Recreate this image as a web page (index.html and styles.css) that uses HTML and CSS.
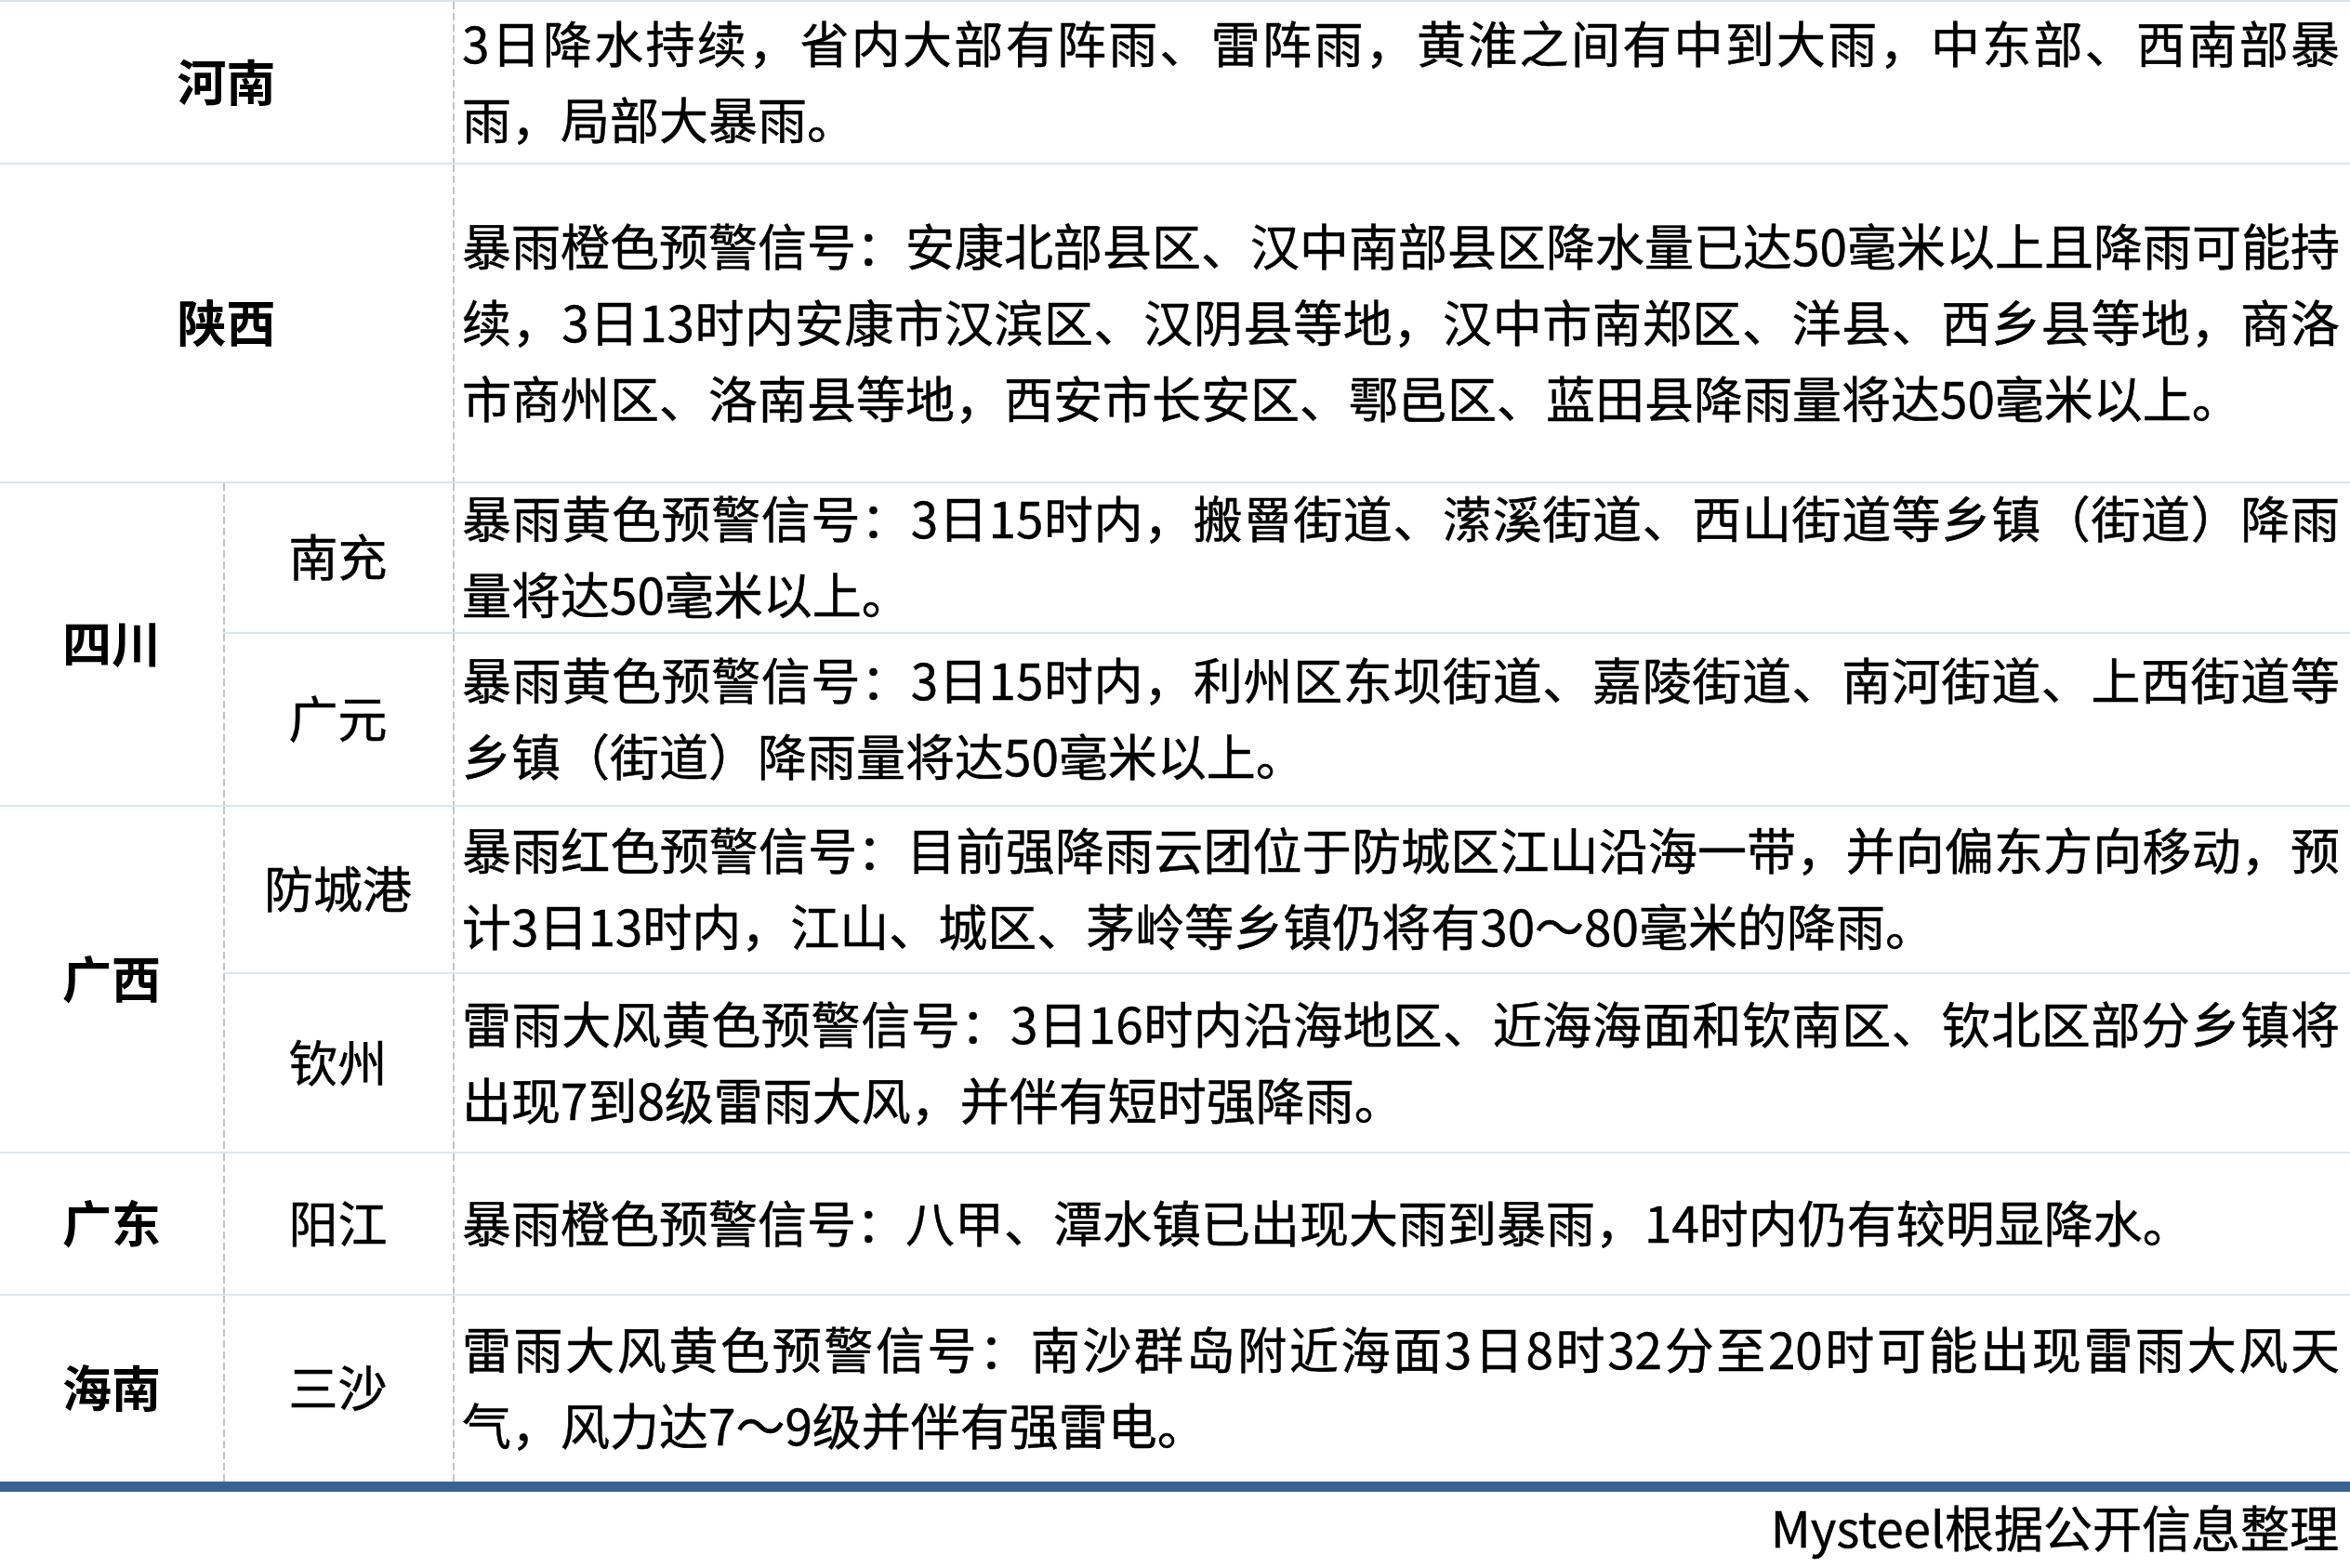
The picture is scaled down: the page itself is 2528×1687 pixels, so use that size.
FILE: index.html
```html
<!DOCTYPE html>
<html lang="zh-CN">
<head>
<meta charset="utf-8">
<title>各地暴雨预警</title>
<link rel="stylesheet" href="styles.css">
</head>
<body>
<div class="sheet">
  <div class="table">
    <div class="cell name prov wide r1">河南</div>
    <div class="cell text r1">
      <span class="ln">3日降水持续，省内大部有阵雨、雷阵雨，黄淮之间有中到大雨，中东部、西南部暴</span>
      <span class="ln last">雨，局部大暴雨。</span>
    </div>

    <div class="cell name prov wide r2">陕西</div>
    <div class="cell text r2">
      <span class="ln">暴雨橙色预警信号：安康北部县区、汉中南部县区降水量已达50毫米以上且降雨可能持</span>
      <span class="ln">续，3日13时内安康市汉滨区、汉阴县等地，汉中市南郑区、洋县、西乡县等地，商洛</span>
      <span class="ln last">市商州区、洛南县等地，西安市长安区、鄠邑区、蓝田县降雨量将达50毫米以上。</span>
    </div>

    <div class="cell name prov span-sc">四川</div>
    <div class="cell name city r3">南充</div>
    <div class="cell text r3">
      <span class="ln">暴雨黄色预警信号：3日15时内，搬罾街道、潆溪街道、西山街道等乡镇（街道）降雨</span>
      <span class="ln last">量将达50毫米以上。</span>
    </div>
    <div class="cell name city r4">广元</div>
    <div class="cell text r4">
      <span class="ln">暴雨黄色预警信号：3日15时内，利州区东坝街道、嘉陵街道、南河街道、上西街道等</span>
      <span class="ln last">乡镇（街道）降雨量将达50毫米以上。</span>
    </div>

    <div class="cell name prov span-gx">广西</div>
    <div class="cell name city r5">防城港</div>
    <div class="cell text r5">
      <span class="ln">暴雨红色预警信号：目前强降雨云团位于防城区江山沿海一带，并向偏东方向移动，预</span>
      <span class="ln last">计3日13时内，江山、城区、茅岭等乡镇仍将有30～80毫米的降雨。</span>
    </div>
    <div class="cell name city r6">钦州</div>
    <div class="cell text r6">
      <span class="ln">雷雨大风黄色预警信号：3日16时内沿海地区、近海海面和钦南区、钦北区部分乡镇将</span>
      <span class="ln last">出现7到8级雷雨大风，并伴有短时强降雨。</span>
    </div>

    <div class="cell name prov r7">广东</div>
    <div class="cell name city r7">阳江</div>
    <div class="cell text r7">
      <span class="ln last">暴雨橙色预警信号：八甲、潭水镇已出现大雨到暴雨，14时内仍有较明显降水。</span>
    </div>

    <div class="cell name prov r8">海南</div>
    <div class="cell name city r8">三沙</div>
    <div class="cell text r8">
      <span class="ln">雷雨大风黄色预警信号：南沙群岛附近海面3日8时32分至20时可能出现雷雨大风天</span>
      <span class="ln last">气，风力达7～9级并伴有强雷电。</span>
    </div>
  </div>
  <div class="source">Mysteel根据公开信息整理</div>
</div>
</body>
</html>
```

FILE: styles.css
```css
html, body {
  margin: 0;
  padding: 0;
  background: #ffffff;
}

body {
  width: 2528px;
  font-family: "Noto Sans CJK SC", "Noto Sans", "Liberation Sans", sans-serif;
  color: #000000;
}

.sheet {
  display: flex;
  flex-direction: column;
}

.table {
  display: grid;
  grid-template-columns: 240px 247px 1fr;
  grid-template-rows: 175px 343px 162px 186px 180px 193px 153px 202px;
  border-bottom: 11px solid #376291;
}

.cell {
  box-sizing: border-box;
  border-top: 2px solid #dbe5ef;
  padding-bottom: 6px;
  display: flex;
  align-items: center;
  min-width: 0;
}

.name {
  justify-content: center;
  font-size: 53px;
  line-height: 82px;
}

.prov {
  font-weight: 700;
  grid-column: 1;
}

.prov.wide {
  grid-column: 1 / span 2;
}

.city {
  grid-column: 2;
  font-weight: 400;
  -webkit-text-stroke: 0.5px #000000;
  background-image: repeating-linear-gradient(to bottom, #c4c4c4 0 8px, transparent 8px 12px);
  background-repeat: no-repeat;
  background-size: 2px 100%;
  background-position: 0 0;
}

.text {
  grid-column: 3;
  flex-direction: column;
  align-items: stretch;
  justify-content: center;
  padding: 0 11px 6px 10px;
  font-size: 53px;
  line-height: 82px;
  -webkit-text-stroke: 0.5px #000000;
  background-image: repeating-linear-gradient(to bottom, #c4c4c4 0 8px, transparent 8px 12px);
  background-repeat: no-repeat;
  background-size: 2px 100%;
  background-position: 0 0;
}

.ln {
  display: block;
  white-space: nowrap;
  text-align: justify;
  text-align-last: justify;
  text-justify: inter-character;
}

.ln.last {
  text-align: left;
  text-align-last: left;
}

.r1 { grid-row: 1; }
.r2 { grid-row: 2; }
.r3 { grid-row: 3; }
.r4 { grid-row: 4; }
.r5 { grid-row: 5; }
.r6 { grid-row: 6; }
.r7 { grid-row: 7; }
.r8 { grid-row: 8; }

.span-sc { grid-row: 3 / span 2; }
.span-gx { grid-row: 5 / span 2; }

.source {
  font-size: 53px;
  line-height: 74px;
  text-align: right;
  padding-right: 12px;
  -webkit-text-stroke: 0.5px #000000;
}
```
